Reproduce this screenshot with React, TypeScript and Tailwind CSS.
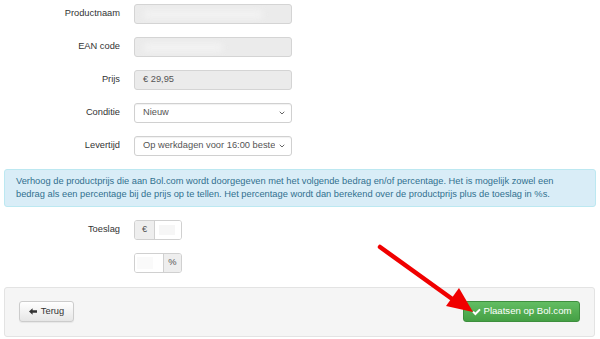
import { ChevronDown } from "lucide-react";

const font = { fontFamily: '"Liberation Sans", Arial, sans-serif' };

function Label({ children }: { children: React.ReactNode }) {
  return <div className="w-[120px] text-right text-[9.3px] text-[#333]">{children}</div>;
}

function Row({ label, children }: { label?: string; children: React.ReactNode }) {
  return (
    <div className="flex items-center gap-[14px]">
      <Label>{label}</Label>
      {children}
    </div>
  );
}

function Blurred({ w }: { w: string }) {
  return (
    <div className="h-[20px] w-[158px] rounded-[3px] border border-[#d4d4d4] bg-[#ebebeb] px-[8px] flex items-center overflow-hidden">
      <div className={`h-[9px] ${w} rounded-sm bg-[#f2f2f2] blur-[3px]`} />
    </div>
  );
}

function Select({ value }: { value: string }) {
  return (
    <div className="h-[20px] w-[158px] rounded-[3px] border border-[#d0d0d0] bg-white pl-[8px] pr-[5px] flex items-center justify-between text-[9.3px] text-[#555] shadow-[inset_0_1px_1px_rgba(0,0,0,0.06)]">
      <span className="whitespace-nowrap overflow-hidden">{value}</span>
      <ChevronDown className="h-[8px] w-[8px] shrink-0 text-[#666]" strokeWidth={3} />
    </div>
  );
}

export default function App() {
  return (
    <div className="relative h-[339px] w-[600px] overflow-hidden bg-white" style={font}>
      <div className="flex flex-col gap-[13px] pt-[4px]">
        <Row label="Productnaam">
          <Blurred w="w-[120px]" />
        </Row>
        <Row label="EAN code">
          <Blurred w="w-[80px]" />
        </Row>
        <Row label="Prijs">
          <div className="h-[20px] w-[158px] rounded-[3px] border border-[#d4d4d4] bg-[#ebebeb] px-[8px] flex items-center text-[9.3px] text-[#555]">
            € 29,95
          </div>
        </Row>
        <Row label="Conditie">
          <Select value="Nieuw" />
        </Row>
        <Row label="Levertijd">
          <Select value="Op werkdagen voor 16:00 beste" />
        </Row>

        {/* info alert */}
        <div className="mx-[4px] rounded-[3px] border border-[#bce8f1] bg-[#d9edf7] px-[11px] py-[5px] text-[9.3px] leading-[13px] text-[#31708f]">
          Verhoog de productprijs die aan Bol.com wordt doorgegeven met het volgende bedrag en/of percentage. Het is mogelijk zowel een
          bedrag als een percentage bij de prijs op te tellen. Het percentage wordt dan berekend over de productprijs plus de toeslag in %s.
        </div>

        <Row label="Toeslag">
          <div className="flex h-[20px] w-[48px] rounded-[3px] border border-[#d0d0d0] overflow-hidden text-[9.3px] text-[#555]">
            <div className="w-[20px] bg-[#eee] border-r border-[#d0d0d0] flex items-center justify-center">€</div>
            <div className="flex-1 bg-white flex items-center px-[4px]">
              <div className="h-[10px] w-[16px] bg-[#f6f6f6]" />
            </div>
          </div>
        </Row>
        <Row>
          <div className="flex h-[20px] w-[48px] rounded-[3px] border border-[#d0d0d0] overflow-hidden text-[9.3px] text-[#555]">
            <div className="flex-1 bg-white flex items-center px-[2px]">
              <div className="h-[12px] w-[16px] bg-[#fafafa]" />
            </div>
            <div className="w-[18px] bg-[#eee] border-l border-[#d0d0d0] flex items-center justify-center">%</div>
          </div>
        </Row>
      </div>

      {/* footer */}
      <div className="mx-[4px] mt-[14px] h-[50px] w-[591px] rounded-[3px] border border-[#e3e3e3] bg-[#f5f5f5] px-[14px] pt-[13px] flex justify-between items-start">
        <button className="h-[21px] w-[55px] rounded-[3px] border border-[#ccc] bg-gradient-to-b from-white to-[#e6e6e6] flex items-center justify-center gap-[4px] text-[9.3px] text-[#333] shadow-[0_1px_1px_rgba(0,0,0,0.06)]">
          <svg width="8" height="7" viewBox="0 0 8 7">
            <path d="M0 3.5 L3.6 0.2 L3.6 2.3 L8 2.3 L8 4.7 L3.6 4.7 L3.6 6.8 Z" fill="#333" />
          </svg>
          Terug
        </button>
        <button className="h-[21px] w-[117px] rounded-[3px] border border-[#3e8f3e] bg-gradient-to-b from-[#62bd62] to-[#45a045] flex items-center justify-center gap-[3px] text-[9.6px] text-white">
          <svg width="9" height="8" viewBox="0 0 9 8">
            <path d="M0.3 4.3 L1.7 2.9 L3.4 4.6 L7.3 0.7 L8.7 2.1 L3.4 7.4 Z" fill="#fff" />
          </svg>
          Plaatsen op Bol.com
        </button>
      </div>

      {/* red annotation arrow */}
      <svg className="absolute left-0 top-0 pointer-events-none" width="600" height="339">
        <line x1="380" y1="247" x2="455" y2="301" stroke="#f00000" strokeWidth="4.5" strokeLinecap="round" />
        <polygon points="446,306 459,288 473,312" fill="#f00000" />
      </svg>
    </div>
  );
}
